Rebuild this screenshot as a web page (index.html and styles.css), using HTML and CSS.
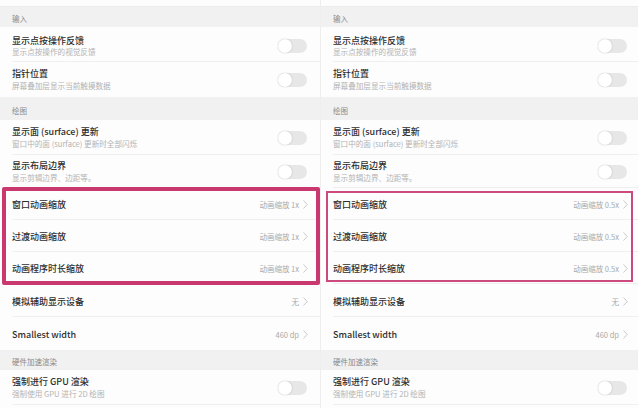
FILE: index.html
```html
<!DOCTYPE html>
<html lang="zh-CN">
<head>
<meta charset="utf-8">
<link rel="stylesheet" href="styles.css">
</head>
<body>
<div class="screen">
  <section class="panel panel-left">
    <div class="stub"></div>
    <div class="header">输入</div>
    <div class="row two first"><div class="text"><div class="title">显示点按操作反馈</div><div class="sub">显示点按操作的视觉反馈</div></div><span class="toggle"></span></div>
    <div class="row two last"><div class="text"><div class="title">指针位置</div><div class="sub">屏幕叠加层显示当前触摸数据</div></div><span class="toggle"></span></div>
    <div class="header tall">绘图</div>
    <div class="row two"><div class="text"><div class="title">显示面 (surface) 更新</div><div class="sub">窗口中的面 (surface) 更新时全部闪烁</div></div><span class="toggle"></span></div>
    <div class="row two short"><div class="text"><div class="title">显示布局边界</div><div class="sub">显示剪辑边界、边距等。</div></div><span class="toggle"></span></div>
    <div class="group group-thick">
      <div class="row one"><span class="title">窗口动画缩放</span><span class="value">动画缩放 1x</span><span class="chev"><svg viewBox="0 0 5 9" width="5" height="9"><polyline points="0.5,0.5 4.2,4.5 0.5,8.5" fill="none" stroke="#c9c9c9" stroke-width="1"/></svg></span></div>
      <div class="row one"><span class="title">过渡动画缩放</span><span class="value">动画缩放 1x</span><span class="chev"><svg viewBox="0 0 5 9" width="5" height="9"><polyline points="0.5,0.5 4.2,4.5 0.5,8.5" fill="none" stroke="#c9c9c9" stroke-width="1"/></svg></span></div>
      <div class="row one"><span class="title">动画程序时长缩放</span><span class="value">动画缩放 1x</span><span class="chev"><svg viewBox="0 0 5 9" width="5" height="9"><polyline points="0.5,0.5 4.2,4.5 0.5,8.5" fill="none" stroke="#c9c9c9" stroke-width="1"/></svg></span></div>
    </div>
    <div class="row one solo"><span class="title">模拟辅助显示设备</span><span class="value">无</span><span class="chev"><svg viewBox="0 0 5 9" width="5" height="9"><polyline points="0.5,0.5 4.2,4.5 0.5,8.5" fill="none" stroke="#c9c9c9" stroke-width="1"/></svg></span></div>
    <div class="row one solo last"><span class="title">Smallest width</span><span class="value">460 dp</span><span class="chev"><svg viewBox="0 0 5 9" width="5" height="9"><polyline points="0.5,0.5 4.2,4.5 0.5,8.5" fill="none" stroke="#c9c9c9" stroke-width="1"/></svg></span></div>
    <div class="header">硬件加速渲染</div>
    <div class="row two"><div class="text"><div class="title">强制进行 GPU 渲染</div><div class="sub">强制使用 GPU 进行 2D 绘图</div></div><span class="toggle"></span></div>
  </section>

  <section class="panel panel-right">
    <div class="stub"></div>
    <div class="header">输入</div>
    <div class="row two first"><div class="text"><div class="title">显示点按操作反馈</div><div class="sub">显示点按操作的视觉反馈</div></div><span class="toggle"></span></div>
    <div class="row two last"><div class="text"><div class="title">指针位置</div><div class="sub">屏幕叠加层显示当前触摸数据</div></div><span class="toggle"></span></div>
    <div class="header tall">绘图</div>
    <div class="row two"><div class="text"><div class="title">显示面 (surface) 更新</div><div class="sub">窗口中的面 (surface) 更新时全部闪烁</div></div><span class="toggle"></span></div>
    <div class="row two short"><div class="text"><div class="title">显示布局边界</div><div class="sub">显示剪辑边界、边距等。</div></div><span class="toggle"></span></div>
    <div class="group group-thin">
      <div class="row one"><span class="title">窗口动画缩放</span><span class="value">动画缩放 0.5x</span><span class="chev"><svg viewBox="0 0 5 9" width="5" height="9"><polyline points="0.5,0.5 4.2,4.5 0.5,8.5" fill="none" stroke="#c9c9c9" stroke-width="1"/></svg></span></div>
      <div class="row one"><span class="title">过渡动画缩放</span><span class="value">动画缩放 0.5x</span><span class="chev"><svg viewBox="0 0 5 9" width="5" height="9"><polyline points="0.5,0.5 4.2,4.5 0.5,8.5" fill="none" stroke="#c9c9c9" stroke-width="1"/></svg></span></div>
      <div class="row one"><span class="title">动画程序时长缩放</span><span class="value">动画缩放 0.5x</span><span class="chev"><svg viewBox="0 0 5 9" width="5" height="9"><polyline points="0.5,0.5 4.2,4.5 0.5,8.5" fill="none" stroke="#c9c9c9" stroke-width="1"/></svg></span></div>
    </div>
    <div class="row one solo"><span class="title">模拟辅助显示设备</span><span class="value">无</span><span class="chev"><svg viewBox="0 0 5 9" width="5" height="9"><polyline points="0.5,0.5 4.2,4.5 0.5,8.5" fill="none" stroke="#c9c9c9" stroke-width="1"/></svg></span></div>
    <div class="row one solo last"><span class="title">Smallest width</span><span class="value">460 dp</span><span class="chev"><svg viewBox="0 0 5 9" width="5" height="9"><polyline points="0.5,0.5 4.2,4.5 0.5,8.5" fill="none" stroke="#c9c9c9" stroke-width="1"/></svg></span></div>
    <div class="header">硬件加速渲染</div>
    <div class="row two"><div class="text"><div class="title">强制进行 GPU 渲染</div><div class="sub">强制使用 GPU 进行 2D 绘图</div></div><span class="toggle"></span></div>
  </section>
</div>
</body>
</html>
```

FILE: styles.css
```css
html, body {
  margin: 0;
  padding: 0;
  background: #ffffff;
}

body {
  width: 638px;
  height: 408px;
  overflow: hidden;
  font-family: "Noto Sans CJK SC", "Noto Sans", sans-serif;
}

.screen {
  display: flex;
  width: 638px;
  height: 408px;
  gap: 1px;
  background: #eeeeee;
}

.panel {
  display: flex;
  flex-direction: column;
  background: #fdfdfd;
  overflow: hidden;
}

.panel-left {
  width: 320px;
  --pl: 12px;
  --pr: 12px;
}

.panel-right {
  width: 317px;
  --pl: 12px;
  --pr: 10px;
}

.stub {
  height: 6px;
  flex: none;
  border-bottom: 1px solid #ececec;
  background: #fdfdfd;
}

.header {
  flex: none;
  height: 20px;
  box-sizing: border-box;
  padding-top: 3px;
  display: flex;
  align-items: center;
  padding-left: var(--pl);
  background: #f1f1f1;
  color: #8a8a8a;
  font-size: 7.5px;
}

.header.tall {
  height: 23px;
}

.row {
  flex: none;
  position: relative;
  display: flex;
  align-items: center;
  padding: 0 var(--pr) 0 var(--pl);
  background: #fdfdfd;
}

.row::after {
  content: "";
  position: absolute;
  left: var(--pl);
  right: 0;
  bottom: 0;
  height: 1px;
  background: #efefef;
}

.row.last::after {
  display: none;
}

.row.two {
  height: 35px;
}

.row.two.first {
  box-sizing: border-box;
  padding-top: 3px;
}

.row.two.short {
  height: 33px;
}

.row.one {
  height: 32px;
}

.row.one.solo {
  height: 33px;
  box-sizing: border-box;
  padding-top: 1px;
}

.text {
  flex: 1;
  display: flex;
  flex-direction: column;
  gap: 1.5px;
}

.title {
  flex: 1;
  color: #2e2e2e;
  font-size: 9px;
  line-height: 11px;
  font-weight: 500;
}

.sub {
  color: #b3b3b3;
  font-size: 7.6px;
  line-height: 10px;
}

.value {
  color: #a9a9a9;
  font-size: 7.5px;
  margin-right: 4px;
}

.chev {
  display: flex;
  align-items: center;
}

.toggle {
  position: relative;
  width: 29px;
  height: 14px;
  border-radius: 7px;
  background: #e7e7e7;
  flex: none;
  margin-right: 1px;
}

.toggle::before {
  content: "";
  position: absolute;
  left: 0;
  top: 0;
  width: 14px;
  height: 14px;
  border-radius: 50%;
  background: #ffffff;
  box-shadow: 0 0 1.5px rgba(0, 0, 0, 0.25);
}

.group {
  position: relative;
  flex: none;
}

.group::before {
  content: "";
  position: absolute;
  z-index: 2;
  pointer-events: none;
  border-style: solid;
  border-color: #c9386f;
}

.group-thick::before {
  left: 2px;
  right: 0;
  top: -1px;
  bottom: -1px;
  border-width: 4px;
  border-radius: 2px;
}

.group-thin::before {
  left: 5px;
  right: 5px;
  top: 3px;
  bottom: 2px;
  border-width: 2px;
  border-color: #cc4a7e;
}
```
